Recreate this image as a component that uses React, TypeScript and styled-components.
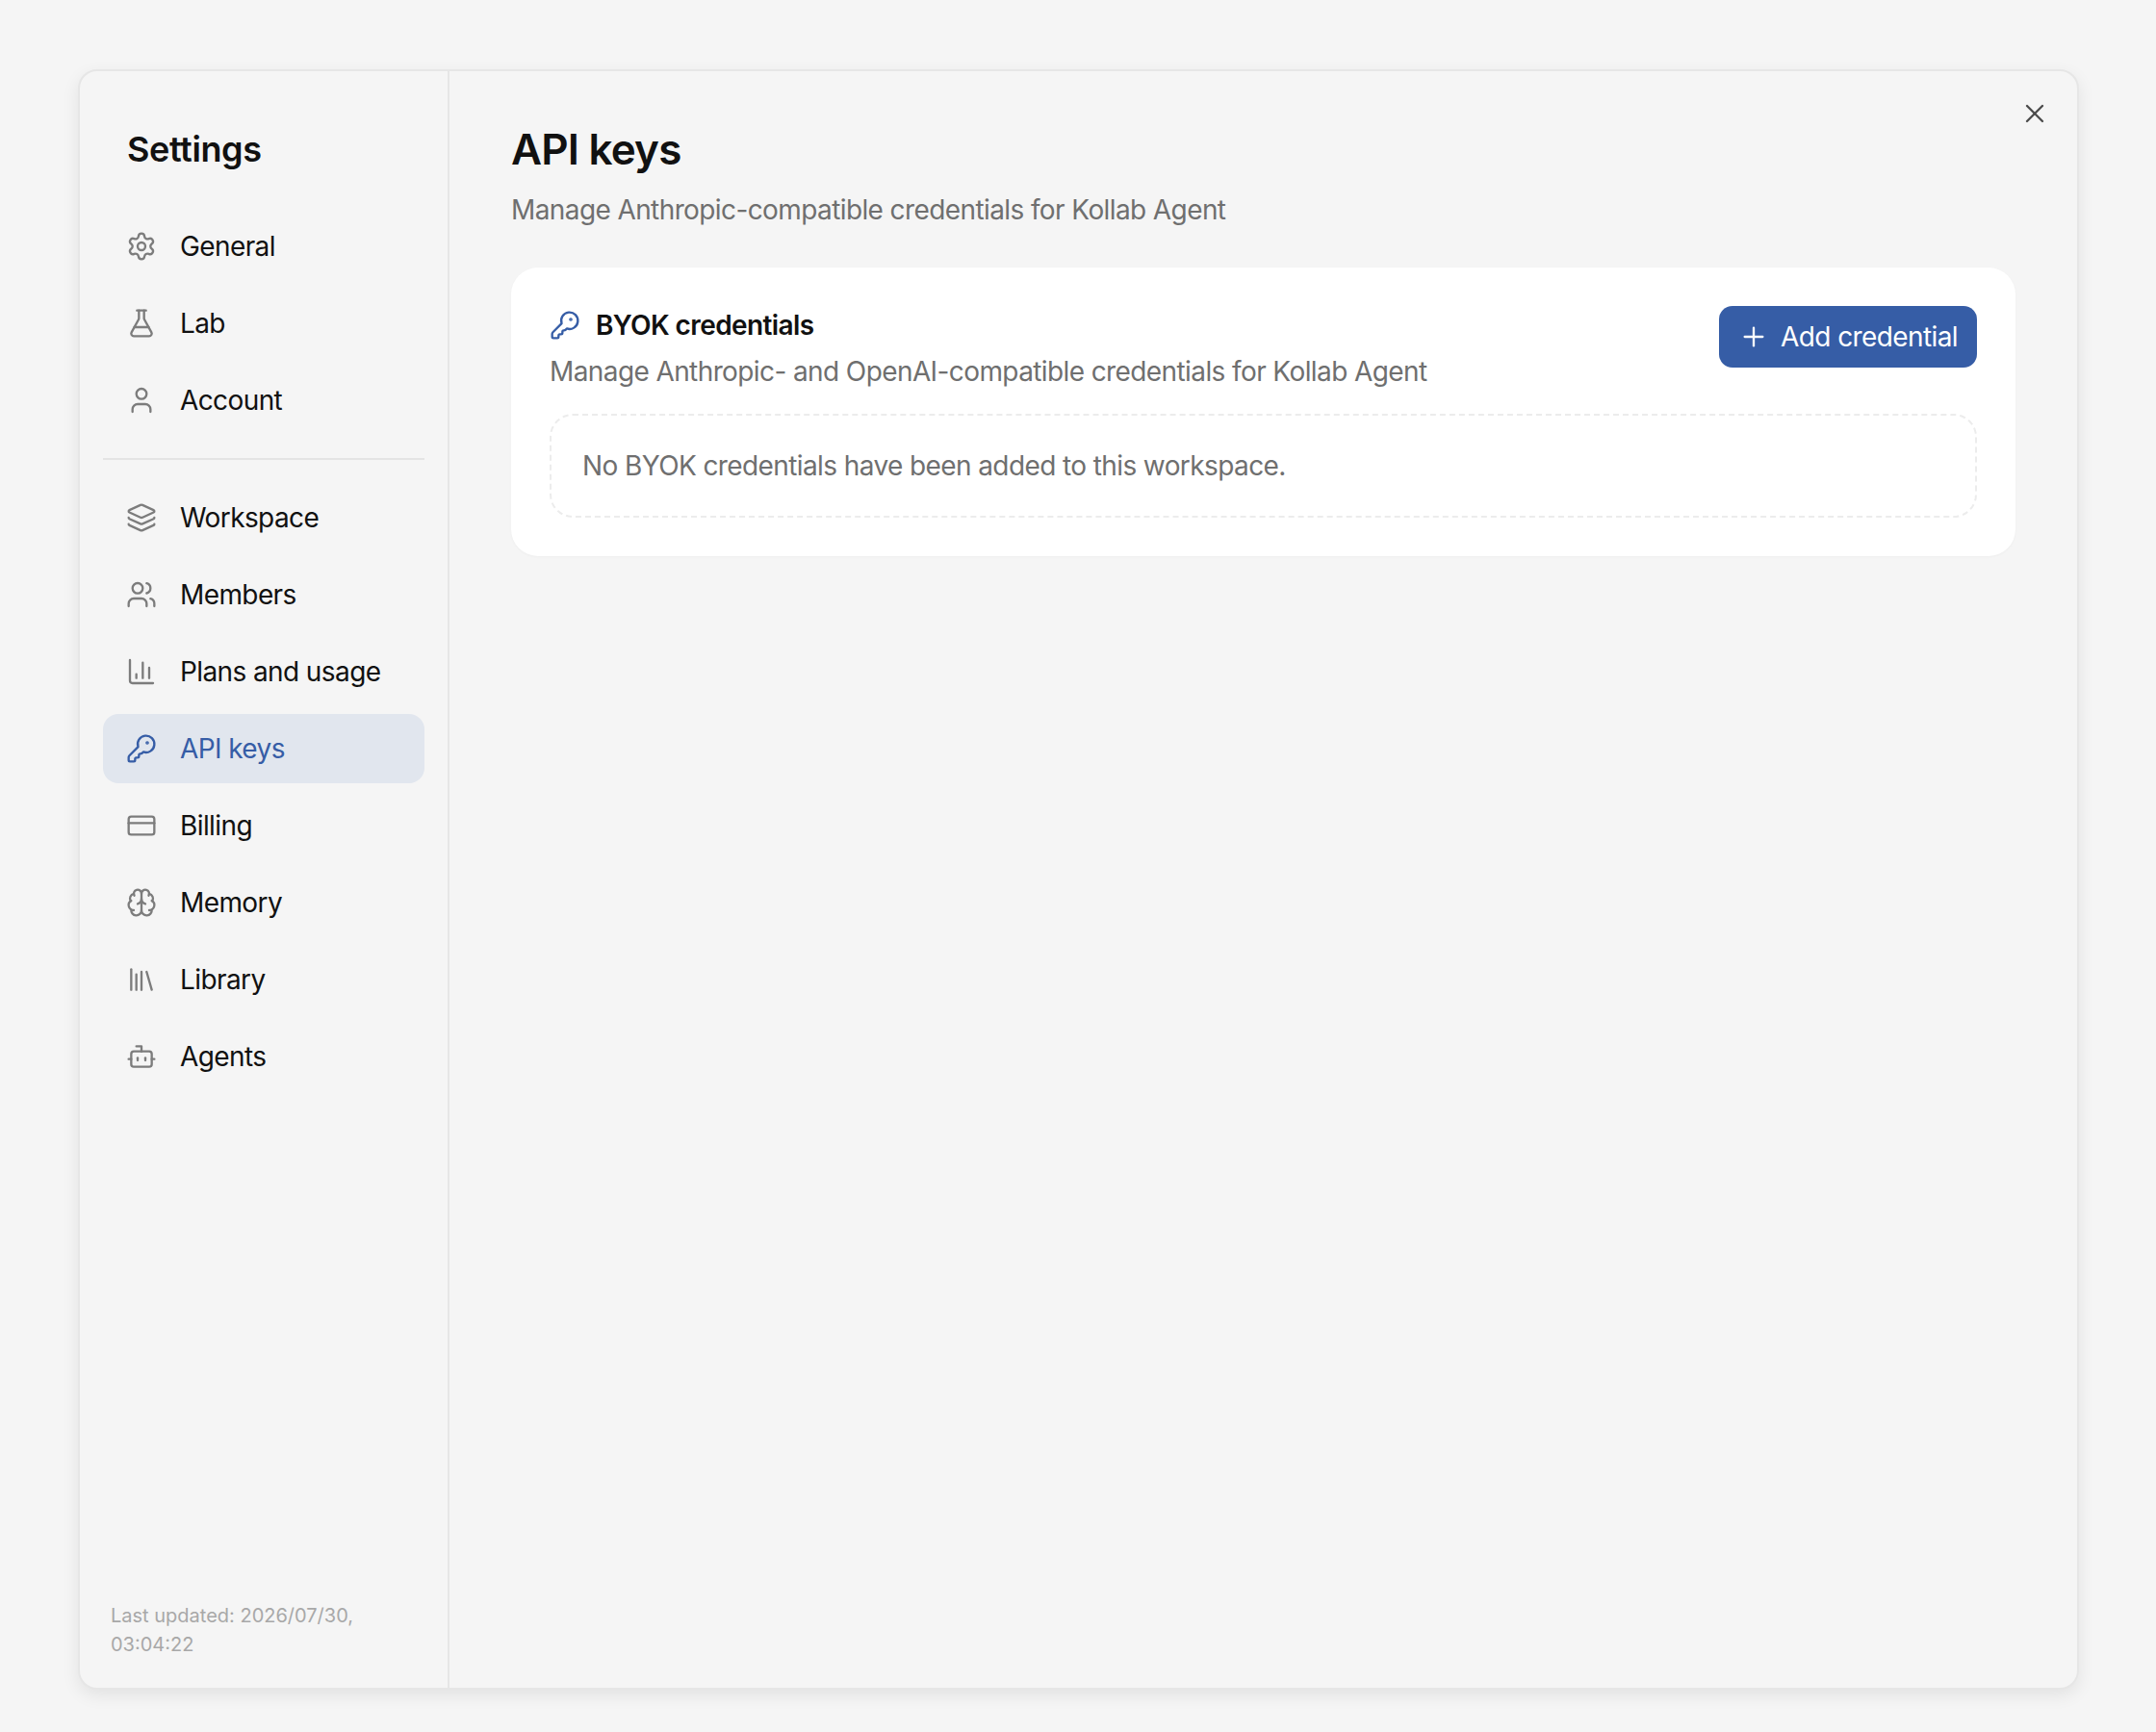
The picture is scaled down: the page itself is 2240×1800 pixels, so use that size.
import React from 'react'
import styled, { createGlobalStyle } from 'styled-components'
import {
  Bot,
  Brain,
  ChartColumn,
  CreditCard,
  FlaskConical,
  KeyRound,
  Layers,
  Library,
  Plus,
  Settings,
  User,
  Users,
  X,
} from 'lucide-react'

const GlobalStyle = createGlobalStyle`
  html, body {
    margin: 0;
    background: #f5f5f5;
    font-family: Inter, "Noto Sans", sans-serif;
  }
  * { box-sizing: border-box; }
`

const Page = styled.div`
  height: 1800px;
  padding: 72px 80px 44px 81px;
`

const Modal = styled.div`
  position: relative;
  display: flex;
  height: 100%;
  background: #f5f5f5;
  border: 2px solid #e6e6e6;
  border-radius: 20px;
  box-shadow: 0 6px 18px rgba(0, 0, 0, 0.08);
`

const Sidebar = styled.aside`
  display: flex;
  flex-direction: column;
  width: 384px;
  padding: 0 24px 30px;
  border-right: 2px solid #e6e6e6;
`

const SidebarTitle = styled.h2`
  margin: 56px 0 40px 25px;
  height: 50px;
  font-size: 36px;
  line-height: 50px;
  font-weight: 600;
  color: #111;
  letter-spacing: -0.4px;
`

const NavGroup = styled.nav`
  display: flex;
  flex-direction: column;
  gap: 8px;
`

const Divider = styled.div`
  height: 2px;
  margin: 24px 0;
  background: #e4e4e4;
`

const NavRow = styled.div<{ $active?: boolean }>`
  display: flex;
  align-items: center;
  gap: 24px;
  height: 72px;
  padding: 0 24px;
  border-radius: 16px;
  font-size: 28px;
  letter-spacing: -0.6px;
  background: ${(p) => (p.$active ? '#e1e6ee' : 'transparent')};
  color: ${(p) => (p.$active ? '#365da6' : '#111')};

  svg {
    flex: none;
    color: ${(p) => (p.$active ? '#365da6' : '#7c7c7c')};
  }
`

const Footer = styled.div`
  margin-top: auto;
  padding: 0 8px;
  font-size: 20px;
  line-height: 30px;
  color: #a8a8a8;
`

const Main = styled.main`
  flex: 1;
  padding: 56px 64px 0 64px;
`

const PageTitle = styled.h1`
  margin: 0;
  height: 50px;
  font-size: 44px;
  line-height: 50px;
  font-weight: 600;
  color: #111;
  letter-spacing: -0.8px;
`

const Subtitle = styled.p`
  margin: 18px 0 0;
  font-size: 28px;
  line-height: 40px;
  letter-spacing: -0.6px;
  color: #6f6f6f;
`

const CloseButton = styled.button`
  position: absolute;
  top: 28px;
  right: 28px;
  display: flex;
  padding: 0;
  border: 0;
  background: none;
  color: #4a4a4a;
`

const Card = styled.section`
  margin-top: 40px;
  padding: 40px;
  background: #fff;
  border-radius: 28px;
  box-shadow: 0 1px 3px rgba(0, 0, 0, 0.03);
`

const CardHeader = styled.div`
  display: flex;
  justify-content: space-between;
  align-items: flex-start;
`

const CardTitleRow = styled.div`
  display: flex;
  align-items: center;
  gap: 16px;
  height: 40px;
  font-size: 28px;
  font-weight: 600;
  letter-spacing: -0.6px;
  color: #111;

  svg {
    color: #365da6;
  }
`

const CardDesc = styled.p`
  margin: 8px 0 0;
  font-size: 28px;
  line-height: 40px;
  letter-spacing: -0.6px;
  color: #6f6f6f;
`

const AddButton = styled.button`
  display: flex;
  align-items: center;
  gap: 12px;
  height: 64px;
  padding: 0 20px;
  border: 0;
  border-radius: 14px;
  background: #365da6;
  color: #fff;
  font: inherit;
  font-size: 28px;
  letter-spacing: -0.6px;
`

const EmptyBox = styled.div`
  display: flex;
  align-items: center;
  height: 108px;
  margin-top: 24px;
  padding: 0 32px;
  border: 2px dashed #ececec;
  border-radius: 24px;
  font-size: 28px;
  letter-spacing: -0.6px;
  color: #6f6f6f;
`

const topItems = [
  { label: 'General', icon: Settings },
  { label: 'Lab', icon: FlaskConical },
  { label: 'Account', icon: User },
]

const bottomItems = [
  { label: 'Workspace', icon: Layers },
  { label: 'Members', icon: Users },
  { label: 'Plans and usage', icon: ChartColumn },
  { label: 'API keys', icon: KeyRound, active: true },
  { label: 'Billing', icon: CreditCard },
  { label: 'Memory', icon: Brain },
  { label: 'Library', icon: Library },
  { label: 'Agents', icon: Bot },
]

type Item = { label: string; icon: typeof Settings; active?: boolean }

const NavList = ({ items }: { items: Item[] }) => (
  <NavGroup>
    {items.map((item) => (
      <NavRow key={item.label} $active={item.active}>
        <item.icon size={32} strokeWidth={1.75} />
        {item.label}
      </NavRow>
    ))}
  </NavGroup>
)

const App: React.FC = () => {
  return (
    <Page>
      <GlobalStyle />
      <Modal>
        <Sidebar>
          <SidebarTitle>Settings</SidebarTitle>
          <NavList items={topItems} />
          <Divider />
          <NavList items={bottomItems} />
          <Footer>
            Last updated: 2026/07/30,
            <br />
            03:04:22
          </Footer>
        </Sidebar>
        <Main>
          <PageTitle>API keys</PageTitle>
          <Subtitle>Manage Anthropic-compatible credentials for Kollab Agent</Subtitle>
          <Card>
            <CardHeader>
              <div>
                <CardTitleRow>
                  <KeyRound size={32} strokeWidth={1.75} />
                  BYOK credentials
                </CardTitleRow>
                <CardDesc>Manage Anthropic- and OpenAI-compatible credentials for Kollab Agent</CardDesc>
              </div>
              <AddButton>
                <Plus size={32} strokeWidth={1.75} />
                Add credential
              </AddButton>
            </CardHeader>
            <EmptyBox>No BYOK credentials have been added to this workspace.</EmptyBox>
          </Card>
        </Main>
        <CloseButton>
          <X size={32} strokeWidth={1.75} />
        </CloseButton>
      </Modal>
    </Page>
  )
}

export default App
